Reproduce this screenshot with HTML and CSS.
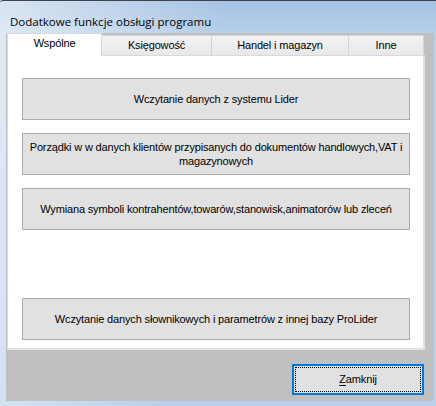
FILE: index.html
```html
<!DOCTYPE html>
<html lang="pl">
<head>
  <meta charset="UTF-8">
  <title>Dodatkowe funkcje obsługi programu</title>
  <link rel="stylesheet" href="styles.css">
</head>
<body>

<div class="window">
  <div class="titlebar">Dodatkowe funkcje obsługi programu</div>

  <div class="client">
    <div class="tabs">
      <div class="tab-strip">
        <div class="tab active">Wspólne</div>
        <div class="tab tab-ksieg">Księgowość</div>
        <div class="tab tab-handel">Handel i magazyn</div>
        <div class="tab tab-inne">Inne</div>
      </div>

      <div class="tab-page">
        <button class="action">Wczytanie danych z systemu Lider</button>
        <button class="action">Porządki w w danych klientów przypisanych do dokumentów handlowych,VAT i<br>magazynowych</button>
        <button class="action">Wymiana symboli kontrahentów,towarów,stanowisk,animatorów lub zleceń</button>
        <button class="action action-last">Wczytanie danych słownikowych i parametrów z innej bazy ProLider</button>
      </div>
    </div>

    <div class="footer">
      <button class="close-btn"><span class="focus"><u>Z</u>amknij</span></button>
    </div>
  </div>
</div>

</body>
</html>
```

FILE: styles.css
```css
* { box-sizing: border-box; }
body {
  margin: 0;
  width: 436px;
  height: 406px;
  overflow: hidden;
  font-family: 'Liberation Sans', Arial, sans-serif;
  font-size: 11px;
  letter-spacing: -0.15px;
  color: #000;
  background:
    linear-gradient(100deg, rgba(255,255,255,0.55) 0%, rgba(255,255,255,0) 45%),
    linear-gradient(#a6c2e3, #b9d1ea 40px);
}
.window {
  height: 406px;
  border-top: 1px solid #3d4450;
  border-top-left-radius: 3px;
  display: flex;
  flex-direction: column;
  padding: 0 2px 5px 6px;
}
.titlebar {
  height: 32px;
  padding: 14px 0 0 4px;
  font-family: 'Open Sans', 'Liberation Sans', sans-serif;
  font-size: 11.5px;
  letter-spacing: 0;
  line-height: 14px;
}
.client {
  height: 368px;
  background: #c0c0c0;
  display: flex;
  flex-direction: column;
  padding-left: 1px;
}
.tabs {
  width: 418px;
}
.tab-strip {
  display: flex;
  height: 22px;
  align-items: flex-start;
}
.tab {
  height: 20px;
  margin-top: 2px;
  text-align: center;
  line-height: 19px;
  background: linear-gradient(#f3f3f3, #e8e8e8);
  border: 1px solid #d4d4d4;
  border-bottom: none;
  border-left: none;
}
.tab.active {
  width: 95px;
  height: 23px;
  margin-top: 0;
  line-height: 19px;
  background: #fff;
  border: 1px solid #d9d9d9;
  border-bottom: none;
  position: relative;
  z-index: 1;
}
.tab-ksieg { width: 110px; }
.tab-handel { width: 137px; }
.tab-inne { width: 75px; }

.tab-page {
  height: 295px;
  background: #fff;
  border: 1px solid #d9d9d9;
  border-right: 2px solid #e3e3e3;
  border-bottom: 2px solid #e3e3e3;
  padding: 22px 0 8px 14px;
  display: flex;
  flex-direction: column;
  gap: 13px;
}
.action {
  width: 388px;
  height: 42px;
  background: #e1e1e1;
  border: 1px solid #adadad;
  font-family: inherit;
  font-size: 11px;
  letter-spacing: inherit;
  line-height: 14px;
  white-space: nowrap;
  color: #000;
  padding: 0;
}
.action-last {
  margin-top: auto;
}

.footer {
  display: flex;
  justify-content: flex-end;
  padding: 14px 10px 0 0;
}
.close-btn {
  width: 132px;
  height: 31px;
  padding: 1px;
  background: #e1e1e1;
  border: 2px solid #0078d7;
  font-family: inherit;
  font-size: 11px;
  letter-spacing: inherit;
  color: #000;
}
.focus {
  display: block;
  height: 100%;
  border: 1px dotted #000;
  line-height: 23px;
}
.focus u {
  text-underline-offset: 2px;
}
```
